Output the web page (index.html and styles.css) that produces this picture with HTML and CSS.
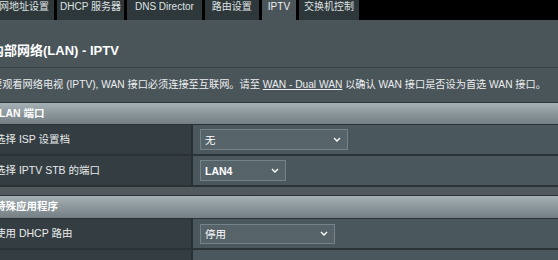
FILE: index.html
```html
<!DOCTYPE html>
<html lang="zh-CN">
<head>
<meta charset="utf-8">
<title>内部网络(LAN) - IPTV</title>
<link rel="stylesheet" href="styles.css">
</head>
<body>
<nav class="tabs">
  <div class="tab tab-first">内网地址设置</div>
  <div class="tab tab-dhcp">DHCP 服务器</div>
  <div class="tab tab-dns">DNS Director</div>
  <div class="tab tab-route">路由设置</div>
  <div class="tab tab-active">IPTV</div>
  <div class="tab">交换机控制</div>
</nav>
<main class="page">
  <h1 class="title">内部网络(LAN) - IPTV</h1>
  <p class="desc">要观看网络电视 (IPTV), WAN 接口必须连接至互联网。请至 <span class="link">WAN - Dual WAN</span> 以确认 WAN 接口是否设为首选 WAN 接口。</p>
  <section class="table">
    <div class="thead thead-lan">LAN 端口</div>
    <div class="row">
      <div class="label">选择 ISP 设置档</div>
      <div class="value">
        <div class="select select-isp"><span>无</span><svg class="chev" width="8" height="5" viewBox="0 0 8 5"><path d="M1 1 L4 4 L7 1" fill="none" stroke="#fff" stroke-width="1.4"/></svg></div>
      </div>
    </div>
    <div class="row">
      <div class="label">选择 IPTV STB 的端口</div>
      <div class="value">
        <div class="select select-stb"><span class="bold">LAN4</span><svg class="chev" width="8" height="5" viewBox="0 0 8 5"><path d="M1 1 L4 4 L7 1" fill="none" stroke="#fff" stroke-width="1.4"/></svg></div>
      </div>
    </div>
    <div class="spacer"></div>
    <div class="thead">特殊应用程序</div>
    <div class="row">
      <div class="label">使用 DHCP 路由</div>
      <div class="value">
        <div class="select select-dhcp"><span>停用</span><svg class="chev" width="8" height="5" viewBox="0 0 8 5"><path d="M1 1 L4 4 L7 1" fill="none" stroke="#fff" stroke-width="1.4"/></svg></div>
      </div>
    </div>
    <div class="row row-top">
      <div class="label">启用组播路由 (IGMP 代理)</div>
      <div class="value note">启用组播路由后，路由器将转发 IPTV 组播数据流至局域网内的设备以便观看。</div>
    </div>
  </section>
</main>
</body>
</html>
```

FILE: styles.css
```css
* { box-sizing: border-box; }
html, body {
  margin: 0;
  padding: 0;
}
body {
  width: 558px;
  height: 260px;
  overflow: hidden;
  background: #4a555a;
  font-family: "Liberation Sans", "Noto Sans CJK SC", sans-serif;
  color: #e8eaeb;
}

.tabs {
  display: flex;
  gap: 3px;
  height: 20px;
  background: #000;
  margin-left: -16px;
}
.tab {
  height: 20px;
  padding: 0 5px;
  background: #2e373a;
  color: #dfe2e3;
  font-size: 10px;
  line-height: 14px;
  white-space: nowrap;
}
.tab-dhcp { padding: 0 3px; }
.tab-dns { padding: 0 8px; }
.tab-route { padding: 0 7px; }
.tab-active {
  padding: 0 6px;
  background: #4a555a;
  color: #eef0f0;
}

.page {
  margin-left: -12px;
}
.title {
  margin: 23px 0 0;
  padding: 0 0 8px 3px;
  font-size: 13px;
  line-height: 16px;
  font-weight: bold;
  color: #fff;
  border-bottom: 1px solid #394246;
}
.desc {
  margin: 10px 0 0;
  padding-left: 4px;
  font-size: 10.2px;
  line-height: 14px;
  white-space: nowrap;
  color: #eceeef;
}
.link {
  text-decoration: underline;
}

.table {
  margin-top: 10px;
  border-top: 1px solid #2f383b;
}
.thead {
  height: 23px;
  padding-left: 7px;
  background: linear-gradient(#a6b1b5, #8c979c 50%, #737f84);
  border-bottom: 1px solid #2a3235;
  color: #fff;
  font-size: 10.5px;
  font-weight: bold;
  line-height: 21px;
}
.thead-lan {
  height: 22px;
  padding-left: 11px;
}
.row {
  display: grid;
  grid-template-columns: 205px 1fr;
  height: 31px;
  border-bottom: 2px solid #2a3235;
}
.label {
  background: #343e42;
  border-right: 2px solid #283034;
  padding-left: 7px;
  font-size: 10.5px;
  line-height: 29px;
  color: #e8eaeb;
  white-space: nowrap;
}
.value {
  background: #4a585e;
  padding-left: 7px;
  display: flex;
  align-items: center;
}
.select {
  height: 21px;
  display: flex;
  align-items: center;
  justify-content: space-between;
  padding: 0 6px 0 4px;
  background: #56646a;
  border: 1px solid #74828a;
  color: #fff;
  font-size: 10.5px;
}
.select-isp { width: 148px; }
.select-stb { width: 86px; }
.select-dhcp { width: 135px; height: 20px; }
.bold { font-weight: bold; }
.chev { flex: none; }

.spacer {
  height: 9px;
  background: #51595c;
  border-bottom: 1px solid #2a3235;
}

.row-top .label {
  line-height: 16px;
  padding-top: 8px;
}
.note {
  align-items: flex-start;
  padding-top: 8px;
  font-size: 10.5px;
  line-height: 16px;
  color: #dfe3e5;
  white-space: nowrap;
}
```
